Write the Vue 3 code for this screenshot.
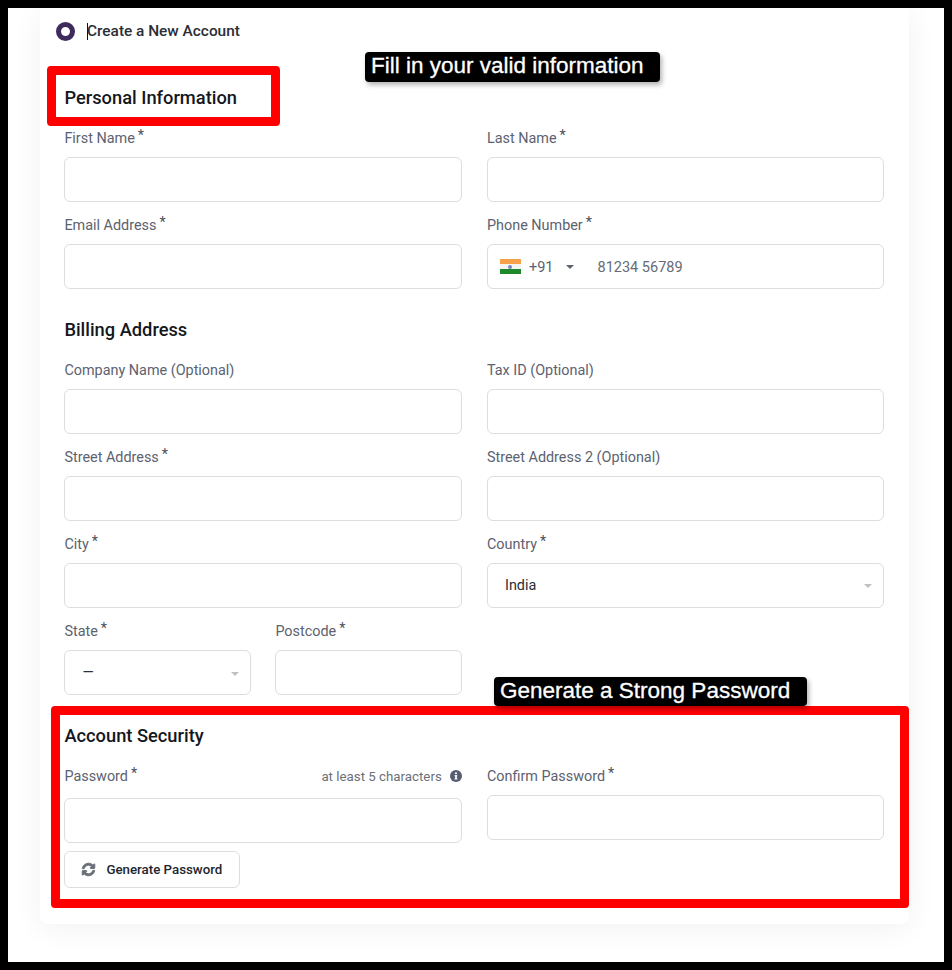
<template>
  <div class="page">
    <form class="card" @submit.prevent>
      <div class="stepper">
        <span class="stepper__dot"></span>
        <span class="stepper__caret"></span>
        <span class="stepper__label">Create a New Account</span>
      </div>

      <h2 class="section-title">Personal Information</h2>
      <div class="fields">
        <div class="field">
          <label class="field__label">First Name<span class="req">*</span></label>
          <input class="field__input" type="text">
        </div>
        <div class="field">
          <label class="field__label">Last Name<span class="req">*</span></label>
          <input class="field__input" type="text">
        </div>
        <div class="field">
          <label class="field__label">Email Address<span class="req">*</span></label>
          <input class="field__input" type="text">
        </div>
        <div class="field">
          <label class="field__label">Phone Number<span class="req">*</span></label>
          <div class="phone">
            <span class="phone__flag">
              <span class="phone__wheel"></span>
            </span>
            <span class="phone__code">+91</span>
            <span class="phone__arrow"></span>
            <input class="phone__input" type="text" placeholder="81234 56789">
          </div>
        </div>
      </div>

      <h2 class="section-title section-title--spaced">Billing Address</h2>
      <div class="fields">
        <div class="field">
          <label class="field__label">Company Name (Optional)</label>
          <input class="field__input" type="text">
        </div>
        <div class="field">
          <label class="field__label">Tax ID (Optional)</label>
          <input class="field__input" type="text">
        </div>
        <div class="field">
          <label class="field__label">Street Address<span class="req">*</span></label>
          <input class="field__input" type="text">
        </div>
        <div class="field">
          <label class="field__label">Street Address 2 (Optional)</label>
          <input class="field__input" type="text">
        </div>
        <div class="field">
          <label class="field__label">City<span class="req">*</span></label>
          <input class="field__input" type="text">
        </div>
        <div class="field">
          <label class="field__label">Country<span class="req">*</span></label>
          <div class="select">
            <span>India</span>
            <span class="select__arrow"></span>
          </div>
        </div>
        <div class="state-row">
          <div class="field">
            <label class="field__label">State<span class="req">*</span></label>
            <div class="select select--state">
              <span>—</span>
              <span class="select__arrow"></span>
            </div>
          </div>
          <div class="field">
            <label class="field__label">Postcode<span class="req">*</span></label>
            <input class="field__input" type="text">
          </div>
        </div>
      </div>

      <h2 class="section-title section-title--spaced">Account Security</h2>
      <div class="fields">
        <div class="field">
          <div class="password-head">
            <label class="field__label">Password<span class="req">*</span></label>
            <span class="hint">
              at least 5 characters
              <svg class="hint__icon" viewBox="0 0 24 24">
                <circle cx="12" cy="12" r="12" fill="#565d70" />
                <circle cx="12" cy="6.5" r="2.2" fill="#fff" />
                <rect x="9" y="10.5" width="5.5" height="2" fill="#fff" />
                <rect x="10.3" y="10.5" width="3.4" height="7.5" fill="#fff" />
                <rect x="9" y="17" width="6" height="2" fill="#fff" />
              </svg>
            </span>
          </div>
          <input class="field__input" type="password">
          <button class="generate" type="button">
            <svg class="generate__icon" viewBox="0 0 512 512">
              <path fill="#6a6f78" stroke="#6a6f78" stroke-width="36" d="M370.72 133.28C339.458 104.008 298.888 87.962 255.848 88c-77.458.068-144.328 53.178-162.791 126.85-1.344 5.363-6.122 9.15-11.651 9.15H24.103c-7.498 0-13.194-6.807-11.807-14.176C33.933 94.924 134.813 8 256 8c66.448 0 126.791 26.136 171.315 68.685L463.03 40.97C478.149 25.851 504 36.559 504 57.941V192c0 13.255-10.745 24-24 24H345.941c-21.382 0-32.09-25.851-16.971-40.971l41.75-41.749zM32 296h134.059c21.382 0 32.09 25.851 16.971 40.971l-41.75 41.75c31.262 29.273 71.835 45.319 114.876 45.28 77.418-.07 144.315-53.144 162.787-126.849 1.344-5.363 6.122-9.15 11.651-9.15h57.304c7.498 0 13.194 6.807 11.807 14.176C478.067 417.076 377.187 504 256 504c-66.448 0-126.791-26.136-171.315-68.685L48.97 471.03C33.851 486.149 8 475.441 8 454.059V320c0-13.255 10.745-24 24-24z" />
            </svg>
            Generate Password
          </button>
        </div>
        <div class="field">
          <label class="field__label">Confirm Password<span class="req">*</span></label>
          <input class="field__input" type="password">
        </div>
      </div>
    </form>

    <!-- annotations drawn over the form -->
    <div class="mark mark--personal"></div>
    <div class="mark mark--security"></div>
    <div class="note note--fill">Fill in your valid information</div>
    <div class="note note--password">Generate a Strong Password</div>
  </div>
</template>

<script setup>
</script>

<style>
html,
body {
  margin: 0;
  background: #fff;
}
</style>

<style scoped>
.page {
  position: relative;
  width: 952px;
  height: 970px;
  box-sizing: border-box;
  border: 8px solid #000;
  background: #fff;
  overflow: hidden;
  font-family: Roboto, "Liberation Sans", sans-serif;
}

.card {
  box-sizing: border-box;
  width: 869px;
  height: 916px;
  margin-left: 32px;
  padding: 0 24px 0 24.4px;
  background: #fff;
  border-radius: 0 0 8px 8px;
  box-shadow: 0 4px 30px rgba(0, 0, 0, 0.06);
}

.stepper {
  display: flex;
  align-items: center;
  height: 46px;
  margin-left: -8.4px;
}

.stepper__dot {
  box-sizing: border-box;
  width: 19px;
  height: 19px;
  border: 5.5px solid #3f2a5e;
  border-radius: 50%;
}

.stepper__caret {
  width: 1px;
  height: 17px;
  margin-left: 12px;
  background: #111;
}

.stepper__label {
  margin-left: -1px;
  font-size: 15.4px;
  font-weight: 500;
  color: #2a2e36;
}

.section-title {
  height: 22px;
  margin: 33px 0 19px;
  font-size: 18.3px;
  font-weight: 500;
  line-height: 22px;
  color: #14171c;
}

.section-title--spaced {
  margin-top: 30px;
}

.fields {
  display: grid;
  grid-template-columns: 397.4px 397.4px;
  column-gap: 25.2px;
  row-gap: 13px;
}

.field__label {
  display: block;
  height: 20px;
  margin-bottom: 9px;
  font-size: 14.4px;
  line-height: 21px;
  color: #5c6270;
}

.req {
  position: relative;
  top: -3px;
  margin-left: 3px;
  color: #4c515c;
}

.field__input,
.phone,
.select {
  display: flex;
  box-sizing: border-box;
  width: 100%;
  height: 45px;
  border: 1px solid #dcdde0;
  border-radius: 6px;
  background: #fff;
  outline: none;
}

.phone {
  align-items: center;
  padding-left: 12px;
}

.phone__flag {
  position: relative;
  width: 21px;
  height: 15px;
  background: linear-gradient(#f7a24b 0 33%, #f4f4f4 33% 67%, #1c8a2c 67%);
}

.phone__wheel {
  position: absolute;
  top: 5.5px;
  left: 8.5px;
  width: 4px;
  height: 4px;
  border-radius: 50%;
  background: #7a88b8;
}

.phone__code {
  margin-left: 8px;
  padding-top: 2px;
  font-size: 14.5px;
  color: #5c6270;
}

.phone__arrow {
  width: 0;
  height: 0;
  margin-left: 12px;
  border-top: 4px solid #5c6270;
  border-left: 4px solid transparent;
  border-right: 4px solid transparent;
}

.phone__input {
  flex: 1;
  min-width: 0;
  margin-left: 24px;
  padding: 1px 0 0;
  border: 0;
  outline: none;
  font-family: inherit;
  font-size: 14.5px;
  color: #5c6270;
}

.phone__input::placeholder {
  color: #666b76;
  opacity: 1;
}

.select {
  align-items: center;
  justify-content: space-between;
  padding: 0 11px 1px 17px;
  font-size: 14.4px;
  color: #2b2f36;
}

.select--state {
  padding-bottom: 0;
}

.select__arrow {
  width: 0;
  height: 0;
  margin-top: 2px;
  border-top: 4px solid #bfc1c5;
  border-left: 4px solid transparent;
  border-right: 4px solid transparent;
}

.state-row {
  display: grid;
  grid-template-columns: 186.4px 186.4px;
  column-gap: 24.6px;
}

.password-head {
  display: flex;
  justify-content: space-between;
  margin-bottom: 12px;
}

.password-head .field__label {
  margin-bottom: 0;
}

.hint {
  display: flex;
  align-items: center;
  height: 20px;
  font-size: 13.3px;
  color: #6b7078;
}

.hint__icon {
  width: 12px;
  height: 12px;
  margin-left: 8px;
}

.generate {
  display: flex;
  align-items: center;
  box-sizing: border-box;
  width: 175.4px;
  height: 37px;
  margin-top: 8px;
  padding: 0 0 0 16.6px;
  border: 1px solid #dcdde0;
  border-radius: 6px;
  background: #fff;
  font-family: inherit;
  font-size: 13.3px;
  font-weight: 500;
  color: #22262e;
}

.generate__icon {
  width: 13px;
  height: 13px;
  margin-right: 11.4px;
  overflow: visible;
}

.mark {
  position: absolute;
  box-sizing: border-box;
  border: 9px solid #f00;
  border-radius: 4px;
}

.mark--personal {
  top: 58px;
  left: 39px;
  width: 233px;
  height: 60px;
}

.mark--security {
  top: 698px;
  left: 43px;
  width: 858px;
  height: 202px;
}

.note {
  position: absolute;
  box-sizing: border-box;
  padding-left: 6px;
  background: #000;
  border-radius: 4px;
  box-shadow: 2px 3px 5px rgba(0, 0, 0, 0.3);
  font-family: "Liberation Sans", Arial, sans-serif;
  font-size: 22.5px;
  -webkit-text-stroke: 0.3px #fff;
  color: #fff;
  white-space: nowrap;
}

.note--fill {
  top: 44px;
  left: 357px;
  width: 295px;
  height: 30px;
  line-height: 28px;
}

.note--password {
  top: 669px;
  left: 486px;
  width: 313px;
  height: 29px;
  line-height: 27px;
}
</style>
